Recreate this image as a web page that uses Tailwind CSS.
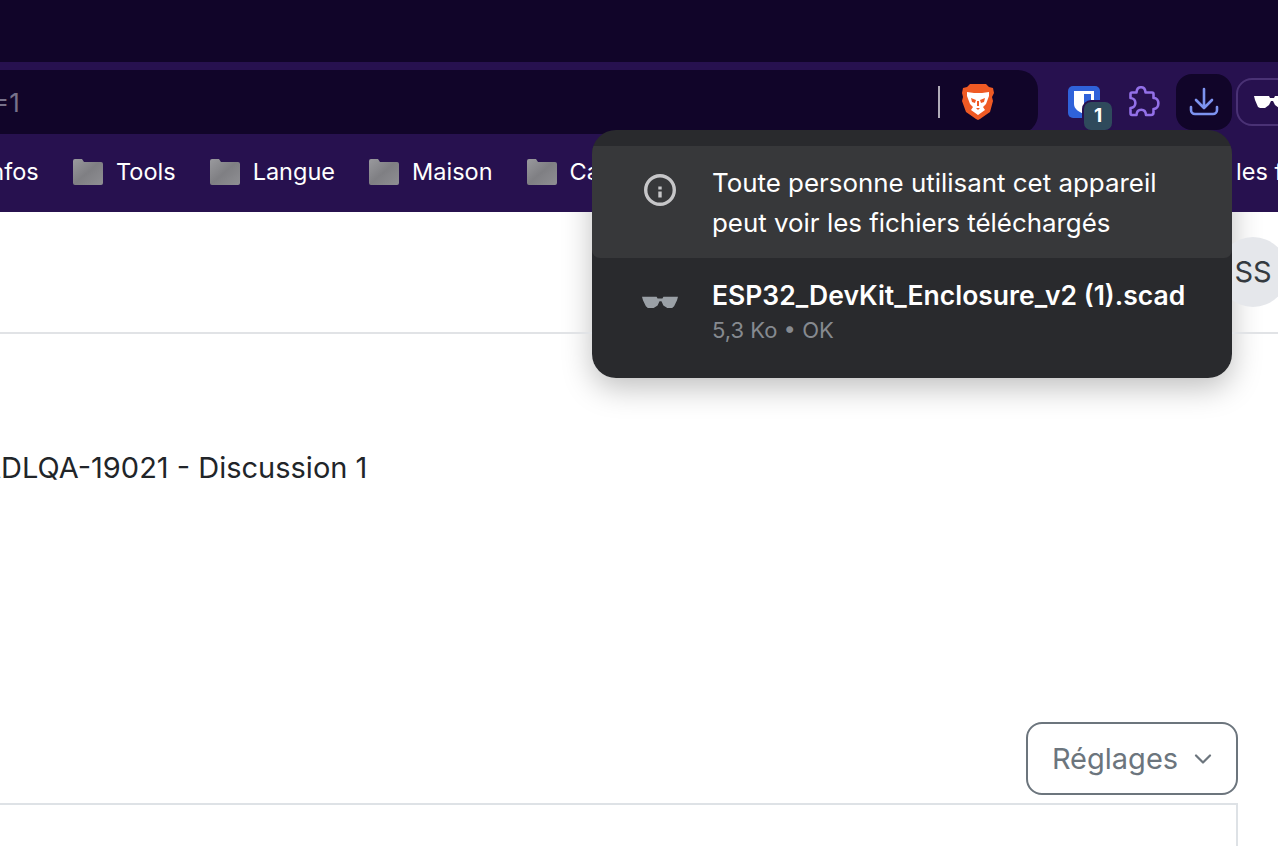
<!DOCTYPE html>
<html lang="fr">
<head>
    <meta charset="UTF-8">
    <title>Téléchargements</title>
    <script src="https://cdn.jsdelivr.net/npm/@tailwindcss/browser@4"></script>
</head>
<body class="font-['Inter',sans-serif] bg-white overflow-hidden">
<div class="relative w-[1278px] h-[846px] overflow-hidden">
    <!-- browser chrome -->
    <header>
        <div class="h-[62px] bg-[#110529]"></div>
        <div class="h-[72px] bg-[#27114f] flex items-start">
            <div class="w-[1038px] h-[64px] mt-2 bg-[#110529] rounded-r-[20px] flex items-center shrink-0">
                <span class="-ml-[8px] text-[26px] text-[#77728a]">=1</span>
                <span class="ml-auto w-[2px] h-8 bg-[#b0acb8]"></span>
                <svg class="ml-[22px] mr-[44px]" width="32" height="36" viewBox="0 0 32 36">
                    <path d="M8 0h16l3 3 4 1 1 5-2 4 1 4-3 11-10 7-2 1-2-1-10-7L0 17l1-4-1-4 1-5 4-1z" fill="#ef5a24"/>
                    <path d="M5 8l7 1h8l7-1 0 4-3 8-3 3 2 3-7 5-7-5 2-3-3-3-3-8z" fill="#fff"/>
                    <path d="M9 14l5 2-1 3-3-1zM23 14l-5 2 1 3 3-1zM14 24h4l-2 2zM15 17h2v5h-2z" fill="#ef5a24"/>
                </svg>
            </div>
            <div class="relative w-8 h-8 mt-6 ml-[30px] shrink-0">
                <svg width="32" height="32" viewBox="0 0 32 32">
                    <rect width="32" height="32" rx="5" fill="#2f62d9"/>
                    <path d="M6 5h20v13c0 5-5 8-10 10-5-2-10-5-10-10z" fill="#fff"/>
                    <path d="M16 8h7v10c0 3-3 5-7 7z" fill="#2f62d9"/>
                </svg>
                <span class="absolute left-[14px] top-[14px] w-[32px] h-[32px] rounded-[9px] bg-[#2f4a5c] border-2 border-[#27114f] flex items-center justify-center text-[19px] font-bold text-white">1</span>
            </div>
            <svg class="mt-6 ml-[27px] shrink-0" width="34" height="32" viewBox="0 0 34 32" fill="none" stroke="#9370e8" stroke-width="2.6" stroke-linejoin="round">
                <path d="M9.500 6.500C10 -0.500 18 -0.500 18.500 6.500L25 6.500Q26.500 6.500 26.500 8L26.500 12C33 11.500 33 23 26.500 23L26.500 26.500Q26.500 29 24 29L19 29C18.500 22 10 22 9.500 29L5 29Q3.500 29 3.500 27L3.500 22C10 21.500 10 12.500 3.500 12L3.500 8Q3.500 6.500 5 6.500Z"/>
            </svg>
            <div class="mt-3 ml-[15px] w-14 h-14 rounded-2xl bg-[#110529] flex items-center justify-center shrink-0">
                <svg width="30" height="30" viewBox="0 0 30 30" fill="none" stroke="#7d93f0" stroke-width="2.6" stroke-linecap="round" stroke-linejoin="round">
                    <path d="M15 2v18M7 13l8 8 8-8M2 20v3a4 4 0 0 0 4 4h18a4 4 0 0 0 4-4v-3"/>
                </svg>
            </div>
            <div class="mt-4 ml-1 w-[80px] h-12 rounded-2xl border-2 border-[#4a3275] flex items-center pl-4 shrink-0">
                <svg class="shrink-0" width="36" height="14" viewBox="0 0 36 14"><path d="M0 1h15l1 2h4l1-2h15l-1 4-3 7-2 1h-5l-4-3-2-4h-2l-2 4-4 3H6l-2-1-3-7z" fill="#fff"/></svg>
            </div>
        </div>
        <nav class="h-[78px] pb-[2px] bg-[#27114f] flex items-center text-[23.5px] text-white overflow-hidden">
            <span class="ml-[-16px] w-[55px] shrink-0">Infos</span>
            <div class="flex items-center gap-[13px] ml-[34px] shrink-0">
                <svg width="30" height="26" viewBox="0 0 30 26"><defs><linearGradient id="fold" x1="0" y1="0" x2="1" y2="1"><stop offset="0" stop-color="#9a9a9e"/><stop offset="0.5" stop-color="#7f7f83"/><stop offset="1" stop-color="#8f8f93"/></linearGradient></defs><path d="M2 0h7l2 3h17a2 2 0 0 1 2 2v19a2 2 0 0 1-2 2H2a2 2 0 0 1-2-2V2a2 2 0 0 1 2-2z" fill="url(#fold)"/></svg>
                <span>Tools</span>
            </div>
            <div class="flex items-center gap-[13px] ml-[34px] shrink-0">
                <svg width="30" height="26" viewBox="0 0 30 26"><path d="M2 0h7l2 3h17a2 2 0 0 1 2 2v19a2 2 0 0 1-2 2H2a2 2 0 0 1-2-2V2a2 2 0 0 1 2-2z" fill="url(#fold)"/></svg>
                <span>Langue</span>
            </div>
            <div class="flex items-center gap-[13px] ml-[34px] shrink-0">
                <svg width="30" height="26" viewBox="0 0 30 26"><path d="M2 0h7l2 3h17a2 2 0 0 1 2 2v19a2 2 0 0 1-2 2H2a2 2 0 0 1-2-2V2a2 2 0 0 1 2-2z" fill="url(#fold)"/></svg>
                <span>Maison</span>
            </div>
            <div class="flex items-center gap-[13px] ml-[34px] shrink-0">
                <svg width="30" height="26" viewBox="0 0 30 26"><path d="M2 0h7l2 3h17a2 2 0 0 1 2 2v19a2 2 0 0 1-2 2H2a2 2 0 0 1-2-2V2a2 2 0 0 1 2-2z" fill="url(#fold)"/></svg>
                <span>Cartes</span>
            </div>
            <span class="ml-auto w-[42px] shrink-0 overflow-hidden whitespace-nowrap">les favoris</span>
        </nav>
    </header>

    <!-- page -->
    <main>
        <div class="h-[122px] border-b-2 border-[#e1e3e6] flex items-center justify-end">
            <div class="w-[70px] h-[70px] -mr-[10px] rounded-full bg-[#e5e7eb] flex items-center justify-center text-[29px] text-[#343a40]">SS</div>
        </div>
        <h1 class="mt-[114px] -ml-[19px] text-[29px] leading-[40px] font-normal text-[#212529] whitespace-nowrap">ADLQA-19021 - Discussion 1</h1>
        <div class="mt-[234px] flex justify-end pr-10">
            <button class="w-[212px] h-[73px] rounded-2xl border-2 border-[#6c757d] flex items-center justify-center gap-[16px] text-[29px] text-[#6c757d]">
                Réglages
                <svg width="18" height="10" viewBox="0 0 18 10" fill="none" stroke="#6c757d" stroke-width="2.200" stroke-linecap="round" stroke-linejoin="round"><path d="M2 1.500l7 7 7-7"/></svg>
            </button>
        </div>
        <div class="mt-2 mr-10 h-[60px] border-t-2 border-r-2 border-[#dee2e6]"></div>
    </main>

    <!-- downloads bubble -->
    <div class="absolute left-[592px] top-[130px] w-[640px] h-[248px] rounded-3xl bg-[#292a2d] pt-4 overflow-hidden">
        <div class="h-[112px] bg-[#37383a] rounded-b-lg flex items-start">
            <svg class="ml-[52px] mt-[28px] shrink-0" width="32" height="32" viewBox="0 0 32 32" fill="none" stroke="#c6c6c8" stroke-width="3.400"><circle cx="16" cy="16" r="14.300"/><path d="M16 17.500v6M16 12.500v3"/></svg>
            <p class="ml-[36px] mt-[17px] text-[25.900px] leading-[40px] text-white whitespace-nowrap">Toute personne utilisant cet appareil<br>peut voir les fichiers téléchargés</p>
        </div>
        <div class="flex items-start">
            <svg class="ml-[50px] mt-[38px] shrink-0" width="36" height="12" viewBox="0 0 37 14" preserveAspectRatio="none"><path d="M0 1h15l1 2h5l1-2h15l-1 4-3 7-2 2h-5l-4-3-2-5h-2l-2 5-4 3H6l-2-2-3-7z" fill="#9aa0a6"/></svg>
            <div class="ml-[34px] mt-[17px]">
                <p class="text-[26.500px] leading-[40px] font-semibold text-white whitespace-nowrap">ESP32_DevKit_Enclosure_v2 (1).scad</p>
                <p class="text-[22px] leading-[30px] text-[#868a90]">5,3 Ko • OK</p>
            </div>
        </div>
    </div>
    <div class="absolute left-[592px] top-[130px] w-[640px] h-[248px] rounded-3xl -z-10 shadow-[0_10px_30px_rgba(0,0,0,0.25)]"></div>
</div>
</body>
</html>
